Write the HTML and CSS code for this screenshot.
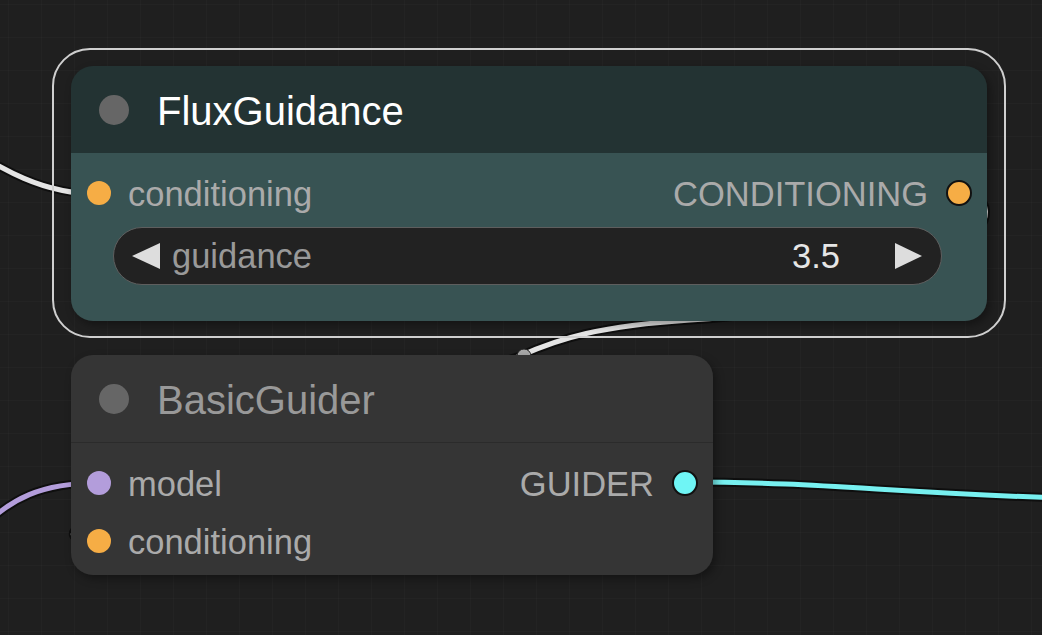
FILE: index.html
```html
<!DOCTYPE html>
<html lang="en">
<head>
<meta charset="utf-8">
<title>FluxGuidance / BasicGuider</title>
<link rel="stylesheet" href="styles.css">
</head>
<body>
<div class="canvas">
  <svg class="links" width="1042" height="635" viewBox="0 0 1042 635">
    <g class="link-shadow">
      <path d="M -80 118 C -10 160, 30 194, 99 194"/>
      <path d="M 960 194 C 1022 194, 985 300, 690 320 C 600 326, 560 338, 520 356 C 300 430, -20 541, 99 541"/>
      <path d="M -30 540 C 10 495, 45 483, 99 483"/>
      <path d="M 685 482 C 820 482, 880 492, 1060 498"/>
    </g>
    <path class="link link-white" d="M -80 118 C -10 160, 30 194, 99 194"/>
    <path class="link link-white" d="M 960 194 C 1022 194, 985 300, 690 320 C 600 326, 560 338, 520 356 C 300 430, -20 541, 99 541"/>
    <circle class="link-center" cx="524" cy="356" r="7"/>
    <path class="link link-purple" d="M -30 540 C 10 495, 45 483, 99 483"/>
    <path class="link link-cyan" d="M 685 482 C 820 482, 880 492, 1060 498"/>
  </svg>

  <div class="node node-flux">
    <div class="node-title title-cyan">
      <span class="title-dot"></span>
      <span class="title-text title-selected">FluxGuidance</span>
    </div>
    <div class="node-body body-cyan">
      <div class="slot-row">
        <div class="slot slot-in"><span class="dot dot-cond"></span><span class="slot-label">conditioning</span></div>
        <div class="slot slot-out"><span class="slot-label">CONDITIONING</span><span class="dot dot-cond dot-out"></span></div>
      </div>
      <div class="widget">
        <span class="arrow arrow-left"></span>
        <span class="w-label">guidance</span>
        <span class="w-value">3.5</span>
        <span class="arrow arrow-right"></span>
      </div>
    </div>
  </div>

  <div class="node node-guider">
    <div class="node-title title-gray">
      <span class="title-dot"></span>
      <span class="title-text">BasicGuider</span>
    </div>
    <div class="node-body body-gray">
      <div class="slot-row">
        <div class="slot slot-in"><span class="dot dot-model"></span><span class="slot-label">model</span></div>
        <div class="slot slot-out"><span class="slot-label">GUIDER</span><span class="dot dot-guider dot-out"></span></div>
      </div>
      <div class="slot-row">
        <div class="slot slot-in"><span class="dot dot-cond"></span><span class="slot-label">conditioning</span></div>
      </div>
    </div>
  </div>
</div>
</body>
</html>
```

FILE: styles.css
```css
* { box-sizing: border-box; }

html, body {
  margin: 0;
  padding: 0;
  width: 1042px;
  height: 635px;
  overflow: hidden;
  background: #1f1f1f;
  font-family: "Liberation Sans", Arial, Helvetica, sans-serif;
}

.canvas {
  position: relative;
  width: 1042px;
  height: 635px;
  overflow: hidden;
  background-color: #1f1f1f;
  background-image:
    linear-gradient(to right, rgba(255,255,255,0.018) 1px, transparent 1px),
    linear-gradient(to bottom, rgba(255,255,255,0.018) 1px, transparent 1px);
  background-size: 33px 33px;
  background-position: 8px 4px;
}

.links {
  position: absolute;
  left: 0;
  top: 0;
}

.link-shadow path {
  fill: none;
  stroke: rgba(0, 0, 0, 0.55);
  stroke-width: 9;
  stroke-linecap: round;
}

.link {
  fill: none;
  stroke-width: 5;
  stroke-linecap: round;
}

.link-white { stroke: #e4e4e4; }
.link-purple { stroke: #b39ddb; }
.link-cyan { stroke: #77f0f0; }

.link-center {
  fill: #a8a8a8;
  stroke: #222;
  stroke-width: 1;
}

/* nodes on the free canvas */
.node {
  position: absolute;
  display: flex;
  flex-direction: column;
  border-radius: 22px;
  box-shadow: 3px 4px 8px rgba(0, 0, 0, 0.35);
}

.node-flux {
  left: 71px;
  top: 66px;
  width: 916px;
}

.node-flux::before {
  content: "";
  position: absolute;
  left: -19px;
  top: -18px;
  right: -19px;
  bottom: -17px;
  border: 2px solid #cfcfcf;
  border-radius: 38px;
  pointer-events: none;
}

.node-guider {
  left: 71px;
  top: 355px;
  width: 642px;
}

.node-title {
  height: 87px;
  display: flex;
  align-items: center;
  padding-left: 28px;
  gap: 28px;
  border-radius: 22px 22px 0 0;
}

.title-cyan { background: #233333; }
.title-gray {
  background: #353535;
  height: 88px;
  border-bottom: 1px solid #2b2b2b;
}

.title-dot {
  width: 30px;
  height: 30px;
  border-radius: 50%;
  background: #666666;
  flex: none;
}

.title-text {
  font-size: 40px;
  line-height: 1;
  color: #999999;
  padding-top: 2px;
}

.title-selected { color: #ffffff; }

.node-body {
  display: flex;
  flex-direction: column;
  border-radius: 0 0 22px 22px;
}

.body-cyan {
  background: #385353;
  padding: 11px 0 36px;
}

.body-gray {
  background: #353535;
  padding: 11px 0 5px;
}

.slot-row {
  height: 58px;
  display: flex;
  align-items: center;
  justify-content: space-between;
  padding: 0 15px 0 16px;
}

.slot {
  display: flex;
  align-items: center;
}

.slot-in { gap: 17px; }
.slot-out { gap: 18px; }

.slot-label {
  font-size: 34.5px;
  line-height: 1;
  color: #aaaaaa;
  padding-top: 2px;
}

.dot {
  width: 24px;
  height: 24px;
  border-radius: 50%;
  flex: none;
}

.dot-out {
  width: 26px;
  height: 26px;
  border: 2px solid #111;
}

.dot-cond { background: #f6ad45; }
.dot-model { background: #b39ddb; }
.dot-guider { background: #6ff5f5; }

.widget {
  margin: 5px 45px 0 42px;
  height: 58px;
  border: 1.5px solid #5e5e5e;
  border-radius: 29px;
  background: #222222;
  display: flex;
  align-items: center;
  padding: 0 19px 0 18px;
}

.arrow {
  width: 0;
  height: 0;
  border-top: 13.5px solid transparent;
  border-bottom: 13.5px solid transparent;
  flex: none;
}

.arrow-left { border-right: 28px solid #dddddd; }
.arrow-right { border-left: 27px solid #dddddd; }

.w-label {
  margin-left: 12px;
  font-size: 34.5px;
  line-height: 1;
  color: #999999;
  flex: 1;
}

.w-value {
  font-size: 34.5px;
  line-height: 1;
  color: #e6e6e6;
  margin-right: 55px;
}
```
